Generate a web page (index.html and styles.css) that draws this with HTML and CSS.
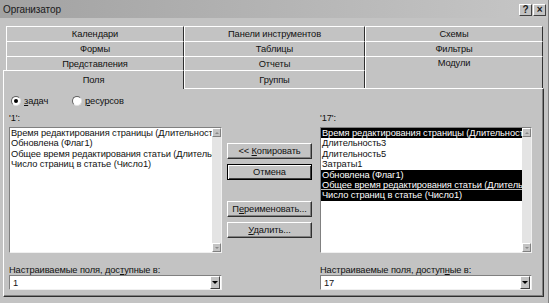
FILE: index.html
```html
<!DOCTYPE html>
<html lang="ru">
<head>
    <meta charset="UTF-8">
    <title>Организатор</title>
    <link rel="stylesheet" href="styles.css">
</head>
<body>
    <div class="window">
        <div class="titlebar">
            <span class="title">Организатор</span>
            <div class="tb-btns">
                <span class="tb-btn">?</span>
                <span class="tb-btn">×</span>
            </div>
        </div>

        <div class="tabs">
            <div class="tab">Календари</div>
            <div class="tab">Панели инструментов</div>
            <div class="tab">Схемы</div>
            <div class="tab">Формы</div>
            <div class="tab">Таблицы</div>
            <div class="tab">Фильтры</div>
            <div class="tab">Представления</div>
            <div class="tab">Отчеты</div>
            <div class="tab tall">Модули</div>
            <div class="tab active">Поля</div>
            <div class="tab">Группы</div>
        </div>

        <div class="panel">
            <div class="radios">
                <label class="radio"><span class="dot checked"></span><span><u>з</u>адач</span></label>
                <label class="radio"><span class="dot"></span><span><u>р</u>есурсов</span></label>
            </div>

            <div class="lbl lbl-left">'1':</div>
            <div class="lbl lbl-right">'17':</div>

            <div class="list list-left">
                <div class="items">
                    <div class="item">Время редактирования страницы (Длительность1)</div>
                    <div class="item">Обновлена (Флаг1)</div>
                    <div class="item">Общее время редактирования статьи (Длительность2)</div>
                    <div class="item">Число страниц в статье (Число1)</div>
                </div>
                <div class="scroll"><span class="sb-btn up"></span><span class="sb-btn down"></span></div>
            </div>

            <div class="actions">
                <div class="btn first">&lt;&lt; <u>К</u>опировать</div>
                <div class="btn default">Отмена</div>
                <div class="btn gap">П<u>е</u>реименовать...</div>
                <div class="btn"><u>У</u>далить...</div>
            </div>

            <div class="list list-right">
                <div class="items">
                    <div class="item sel">Время редактирования страницы (Длительность1)</div>
                    <div class="item">Длительность3</div>
                    <div class="item">Длительность5</div>
                    <div class="item">Затраты1</div>
                    <div class="item sel">Обновлена (Флаг1)</div>
                    <div class="item sel focus">Общее время редактирования статьи (Длительность2)</div>
                    <div class="item sel">Число страниц в статье (Число1)</div>
                </div>
                <div class="scroll"><span class="sb-btn up"></span><span class="sb-btn down"></span></div>
            </div>

            <div class="lbl bl-left">Настраиваемые поля, дос<u>т</u>упные в:</div>
            <div class="lbl bl-right">Настраиваемые поля, доступ<u>н</u>ые в:</div>

            <div class="combo dd-left"><span class="value">1</span><span class="arrow"></span></div>
            <div class="combo dd-right"><span class="value">17</span><span class="arrow"></span></div>
        </div>
    </div>
</body>
</html>
```

FILE: styles.css
```css
body {
    margin: 0;
    background: #c3c3c3;
    font-family: "Liberation Sans", Arial, sans-serif;
    font-size: 9.3px;
    letter-spacing: -0.1px;
    color: #111;
}
u {
    text-decoration: underline;
    text-underline-offset: 1px;
}
.window {
    width: 549px;
    height: 303px;
    background: #c3c3c3;
    overflow: hidden;
    box-sizing: border-box;
    border-right: 1px solid #808080;
}

/* title bar */
.titlebar {
    height: 18px;
    display: flex;
    align-items: center;
    justify-content: space-between;
    padding: 0 2px 0 3px;
    background: linear-gradient(to right, #a2a2a2, #c6c6c6);
    font-size: 10px;
    color: #1a1a1a;
}
.tb-btns {
    display: flex;
    gap: 1px;
    margin-top: 1px;
}
.tb-btn {
    width: 11px;
    height: 10px;
    background: #c3c3c3;
    border: 1px solid;
    border-color: #fff #404040 #404040 #fff;
    font-size: 10px;
    font-weight: bold;
    line-height: 10px;
    text-align: center;
}

/* tabs */
.tabs {
    display: grid;
    grid-template-columns: 178px 181px 178px;
    grid-template-rows: 15px 15px 14px 18px;
    margin: 8px 0 0 6px;
}
.tab {
    border-top: 1px solid #fff;
    border-left: 1px solid #fff;
    border-right: 1px solid #303030;
    display: flex;
    align-items: center;
    justify-content: center;
    white-space: nowrap;
}
.tab.tall {
    grid-row: span 2;
    align-items: flex-start;
    padding-top: 1px;
}
.tab.active {
    margin-left: -3px;
    margin-bottom: -1px;
    position: relative;
    z-index: 1;
    background: #c3c3c3;
}

/* panel */
.panel {
    box-sizing: border-box;
    width: 541px;
    height: 209px;
    margin-left: 3px;
    padding: 6px 0 0 5px;
    border-top: 1px solid #fff;
    border-left: 1px solid #fff;
    border-right: 1px solid #303030;
    border-bottom: 1px solid #303030;
    box-shadow: inset -1px -1px #808080;
    display: grid;
    grid-template-columns: 213px 98px 212px;
    grid-template-rows: auto auto auto auto auto;
    align-content: start;
    grid-template-areas:
        "radio . ."
        "lbl1 . lbl2"
        "list1 btns list2"
        "blbl1 . blbl2"
        "dd1 . dd2";
}
.radios {
    grid-area: radio;
    display: flex;
    align-items: center;
    height: 11px;
    padding-left: 2px;
}
.radio {
    display: flex;
    align-items: center;
    gap: 3px;
    width: 61px;
}
.dot {
    width: 8px;
    height: 8px;
    border-radius: 50%;
    background: #fff;
    border: 1px solid;
    border-color: #606060 #e0e0e0 #e0e0e0 #606060;
    display: flex;
    align-items: center;
    justify-content: center;
}
.dot.checked::after {
    content: "";
    width: 4px;
    height: 4px;
    border-radius: 50%;
    background: #000;
}
.lbl {
    line-height: 11px;
    height: 11px;
    white-space: nowrap;
}
.lbl-left { grid-area: lbl1; margin-top: 7px; }
.lbl-right { grid-area: lbl2; margin-top: 7px; }
.bl-left { grid-area: blbl1; margin-top: 12px; line-height: 10px; height: 10px; }
.bl-right { grid-area: blbl2; margin-top: 12px; line-height: 10px; height: 10px; }

/* lists */
.list {
    box-sizing: border-box;
    height: 126px;
    margin-top: 3px;
    background: #fff;
    border: 1px solid;
    border-color: #808080 #f0f0f0 #f0f0f0 #808080;
    display: flex;
}
.list-left { grid-area: list1; }
.list-right { grid-area: list2; }
.items {
    flex: 1;
    min-width: 0;
    overflow: hidden;
}
.item {
    padding-left: 1px;
    line-height: 10.4px;
    height: 10.4px;
    white-space: nowrap;
    overflow: hidden;
}
.item.sel {
    background: #000;
    color: #fff;
}
.item.focus {
    box-shadow: inset 0 -1px 0 #bbb;
}
.scroll {
    width: 9px;
    background: #e4e4e4;
    display: flex;
    flex-direction: column;
    justify-content: space-between;
}
.sb-btn {
    box-sizing: border-box;
    width: 9px;
    height: 9px;
    background: #c3c3c3;
    border: 1px solid;
    border-color: #fff #808080 #808080 #fff;
    display: flex;
    align-items: center;
    justify-content: center;
}
.sb-btn::after {
    content: "";
    border-left: 2px solid transparent;
    border-right: 2px solid transparent;
}
.sb-btn.up::after { border-bottom: 2px solid #888; }
.sb-btn.down::after { border-top: 2px solid #888; }

/* buttons */
.actions {
    grid-area: btns;
    margin-left: 5px;
    display: flex;
    flex-direction: column;
}
.btn {
    box-sizing: border-box;
    width: 85px;
    height: 16px;
    margin-top: 5px;
    border: 1px solid;
    border-color: #fff #303030 #303030 #fff;
    box-shadow: inset -1px -1px #808080;
    text-align: center;
    line-height: 14px;
    white-space: nowrap;
}
.btn.first { margin-top: 19px; }
.btn.gap { margin-top: 21px; }
.btn.default {
    border-color: #000;
    box-shadow: inset 1px 1px #fff, inset -1px -1px #404040;
}

/* combos */
.combo {
    box-sizing: border-box;
    height: 15px;
    background: #fff;
    border: 1px solid;
    border-color: #808080 #f0f0f0 #f0f0f0 #808080;
    display: flex;
    align-items: center;
}
.dd-left { grid-area: dd1; }
.dd-right { grid-area: dd2; }
.value {
    flex: 1;
    padding-left: 3px;
}
.arrow {
    box-sizing: border-box;
    width: 10px;
    height: 13px;
    margin-right: 1px;
    background: #c3c3c3;
    border: 1px solid;
    border-color: #fff #404040 #404040 #fff;
    display: flex;
    align-items: center;
    justify-content: center;
}
.arrow::after {
    content: "";
    border-left: 3px solid transparent;
    border-right: 3px solid transparent;
    border-top: 3px solid #000;
}
```
